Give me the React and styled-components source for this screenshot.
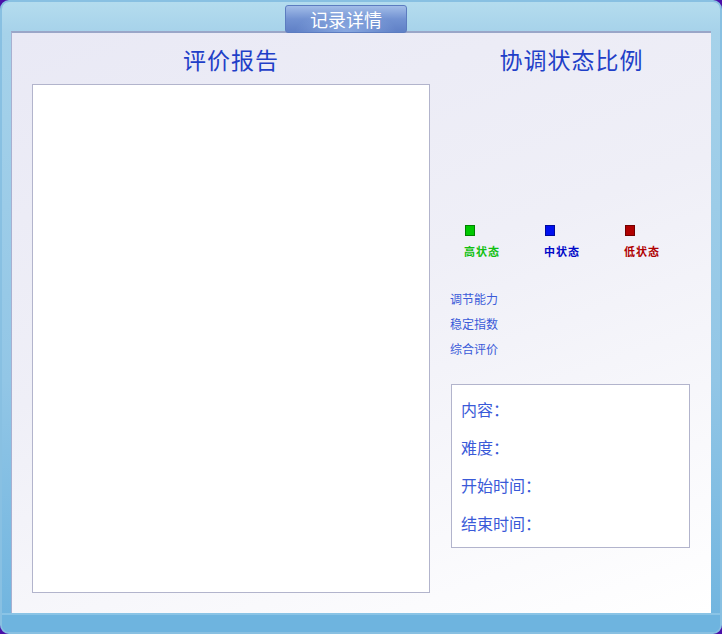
import React from "react";
import styled, { createGlobalStyle } from "styled-components";

const Global = createGlobalStyle`
  html, body {
    margin: 0;
    padding: 0;
    background: #4a10a8;
  }
  body {
    font-family: "Noto Sans CJK SC", "Liberation Sans", sans-serif;
  }
`;

const Frame = styled.div`
  width: 722px;
  height: 634px;
  box-sizing: border-box;
  border-radius: 9px;
  background: linear-gradient(to bottom, #b4dcee 0, #a6d2ea 31px, #92c6e6 60%, #6fb4df 100%);
  border: 2px solid #88c0e2;
  display: flex;
  flex-direction: column;
  overflow: hidden;
`;

const TopBar = styled.div`
  height: 29px;
  display: flex;
  padding-left: 283px;
  align-items: flex-end;
`;

const Tab = styled.div`
  width: 122px;
  height: 28px;
  box-sizing: border-box;
  border: 1px solid #5c7cc0;
  border-radius: 3px;
  background:
    radial-gradient(ellipse at 50% 100%, rgba(170,200,245,0.55) 0, rgba(170,200,245,0) 60%),
    linear-gradient(to bottom, #a2bde8 0, #7292d2 50%, #5f80c6 100%);
  color: #fff;
  font-size: 18px;
  display: flex;
  align-items: center;
  justify-content: center;
  margin-bottom: -2px;
  position: relative;
  z-index: 1;
`;

const Panel = styled.div`
  margin: 0 9px;
  flex: 1;
  display: flex;
  padding: 12px 0 0 20px;
  box-sizing: border-box;
  gap: 20px;
  border-top: 2px solid #9aa6c8;
  border-left: 1px solid #a8b0d0;
  background: linear-gradient(160deg, #e9e9f5 0, #efeff7 45%, #ffffff 100%);
`;

const Bottom = styled.div`
  height: 17px;
  background: #6eb4df;
  border-top: 2px solid #8ac4e6;
`;

const Column = styled.div`
  display: flex;
  flex-direction: column;
  width: ${p => p.w}px;
  flex-shrink: 0;
`;

const Title = styled.div`
  font-size: 23px;
  color: #1f3fc8;
  text-align: center;
  height: 28px;
  line-height: 28px;
  margin-bottom: 11px;
  letter-spacing: 1px;
  padding-left: ${p => p.pl || 0}px;
`;

const ReportBox = styled.div`
  width: 398px;
  height: 509px;
  box-sizing: border-box;
  background: #fff;
  border: 1px solid #b2b4cc;
`;

const Legend = styled.div`
  display: flex;
  margin-top: 141px;
  padding-left: 14px;
`;

const LegendItem = styled.div`
  width: 80px;
  flex-shrink: 0;
  display: flex;
  flex-direction: column;
  align-items: flex-start;
`;

const Swatch = styled.div`
  width: 10px;
  height: 11px;
  margin-left: 1px;
  background: ${p => p.c};
  border: 1px solid rgba(0,0,0,0.35);
  box-sizing: border-box;
`;

const LegendLabel = styled.div`
  margin-top: 7px;
  font-size: 11px;
  font-weight: bold;
  letter-spacing: 1px;
  color: ${p => p.c};
`;

const Metrics = styled.div`
  margin-top: 31px;
  display: flex;
  flex-direction: column;
  gap: 8px;
`;

const Metric = styled.div`
  font-size: 12px;
  color: #3a5ad8;
  height: 17px;
  line-height: 17px;
`;

const InfoBox = styled.div`
  margin-top: 27px;
  margin-left: 1px;
  width: 239px;
  height: 164px;
  box-sizing: border-box;
  background: #fff;
  border: 1px solid #b2b4cc;
  padding: 13px 0 0 9px;
  display: flex;
  flex-direction: column;
  gap: 16px;
`;

const InfoRow = styled.div`
  font-size: 16px;
  color: #3a5ad8;
  height: 22px;
  line-height: 22px;
`;

const legend = [
  { label: "高状态", color: "#00c800", text: "#10c010" },
  { label: "中状态", color: "#0010f0", text: "#0008c8" },
  { label: "低状态", color: "#b00000", text: "#b00000" },
];

export default function App() {
  return (
    <>
      <Global />
      <Frame>
        <TopBar>
          <Tab>记录详情</Tab>
        </TopBar>
        <Panel>
          <Column w={398}>
            <Title>评价报告</Title>
            <ReportBox />
          </Column>
          <Column w={241}>
            <Title pl={2}>协调状态比例</Title>
            <Legend>
              {legend.map(l => (
                <LegendItem key={l.label}>
                  <Swatch c={l.color} />
                  <LegendLabel c={l.text}>{l.label}</LegendLabel>
                </LegendItem>
              ))}
            </Legend>
            <Metrics>
              <Metric>调节能力</Metric>
              <Metric>稳定指数</Metric>
              <Metric>综合评价</Metric>
            </Metrics>
            <InfoBox>
              <InfoRow>内容：</InfoRow>
              <InfoRow>难度：</InfoRow>
              <InfoRow>开始时间：</InfoRow>
              <InfoRow>结束时间：</InfoRow>
            </InfoBox>
          </Column>
        </Panel>
        <Bottom />
      </Frame>
    </>
  );
}
